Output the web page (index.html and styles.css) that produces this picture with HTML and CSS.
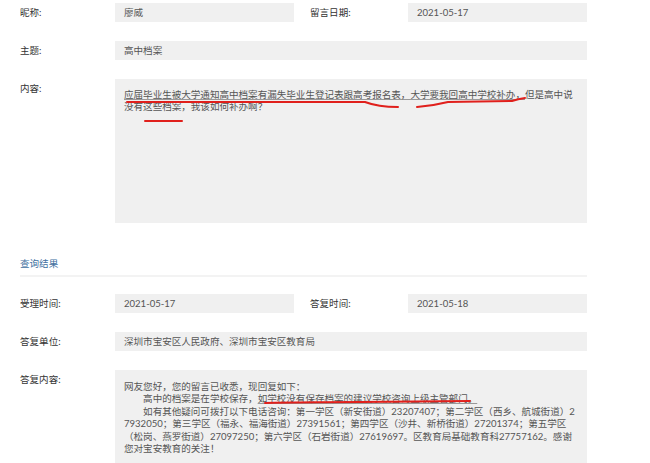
FILE: index.html
```html
<!DOCTYPE html>
<html lang="zh-CN">
<head>
<meta charset="UTF-8">
<meta name="viewport" content="width=device-width, initial-scale=1.0">
<title>留言详情</title>
<link rel="stylesheet" href="styles.css">
</head>
<body>
<div class="detail">
  <div class="row">
    <div class="label">昵称:</div>
    <div class="field half">廖威</div>
    <div class="label second">留言日期:</div>
    <div class="field half">2021-05-17</div>
  </div>
  <div class="row">
    <div class="label">主题:</div>
    <div class="field wide">高中档案</div>
  </div>
  <div class="row">
    <div class="label">内容:</div>
    <div class="field wide area question"><span class="marked">应届毕业生被大学通知高中档案有漏失毕业生登记表跟高考报名表，大学要我回高中学校补办，</span>但是高中说没有这些档案，我该如何补办啊？</div>
  </div>

  <div class="section-title">查询结果</div>

  <div class="row">
    <div class="label">受理时间:</div>
    <div class="field half">2021-05-17</div>
    <div class="label second">答复时间:</div>
    <div class="field half">2021-05-18</div>
  </div>
  <div class="row">
    <div class="label">答复单位:</div>
    <div class="field wide">深圳市宝安区人民政府、深圳市宝安区教育局</div>
  </div>
  <div class="row">
    <div class="label">答复内容:</div>
    <div class="field wide area reply">网友您好，您的留言已收悉，现回复如下：<br>　　高中的档案是在学校保存，<span class="marked">如学校没有保存档案的建议学校咨询上级主管部门。</span><br>　　如有其他疑问可拨打以下电话咨询：第一学区（新安街道）23207407；第二学区（西乡、航城街道）27932050；第三学区（福永、福海街道）27391561；第四学区（沙井、新桥街道）27201374；第五学区（松岗、燕罗街道）27097250；第六学区（石岩街道）27619697。区教育局基础教育科27757162。感谢您对宝安教育的关注！</div>
  </div>
</div>

<!-- hand-drawn marks on top of the screenshot -->
<svg class="marks" width="650" height="463" viewBox="0 0 650 463">
  <path d="M127 102 L365 102 Q378 107 398 107" />
  <path d="M417 107 Q432 106 448 102 L512 101 Q518 99 525 98" />
  <path d="M145 121 L182 121" />
  <path d="M265 403 Q300 402 360 402 L470 401" />
</svg>
</body>
</html>
```

FILE: styles.css
```css
body {
  margin: 0;
  font-family: Lato, "Noto Sans CJK SC", sans-serif;
  font-size: 9.55px;
  color: #333;
  background-color: #fff;
  position: relative;
  overflow: hidden;
}
.detail {
  width: 567px;
  padding: 3px 0 0 20px;
}
.row {
  display: flex;
  align-items: flex-start;
  margin-bottom: 19px;
}
.label {
  width: 95px;
  line-height: 19px;
  color: #333;
}
.label.second {
  width: 98px;
  margin-left: 16px;
}
.field {
  background-color: #f0f0f0;
  color: #555;
  line-height: 19px;
  height: 19px;
  padding: 0 9px;
  box-sizing: border-box;
}
.half {
  width: 179px;
}
.wide {
  width: 472px;
}
.area {
  height: auto;
  line-height: 12.4px;
  word-break: break-all;
}
.question {
  height: 144px;
  padding-top: 10px;
}
.reply {
  min-height: 110px;
  padding-top: 11px;
}
.marked {
  text-decoration: underline;
  text-decoration-color: #999;
}
.section-title {
  margin-top: 31px;
  line-height: 19px;
  padding-bottom: 2px;
  border-bottom: 2px solid #f3f3f3;
  margin-bottom: 17px;
  color: #41709f;
}
.marks {
  position: absolute;
  top: 0;
  left: 0;
  pointer-events: none;
}
.marks path {
  fill: none;
  stroke: #e0201c;
  stroke-width: 2;
  stroke-linecap: round;
}
```
